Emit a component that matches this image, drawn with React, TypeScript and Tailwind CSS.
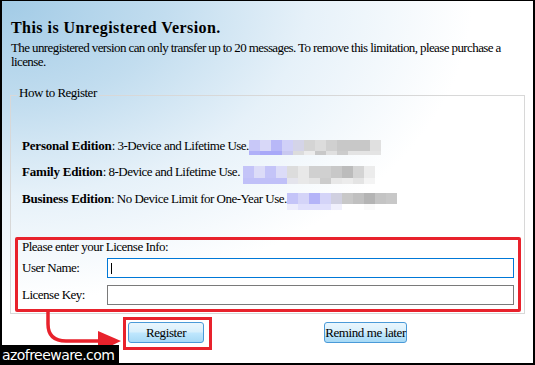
import React from "react";

const serif = { fontFamily: '"Liberation Serif", "Times New Roman", serif' };

const personal = {
  top: ["#c8c8f8", "#d8d8f8", "#b8b8f8", "#d0d0f8", "#d4d4e8", "#d4d4d4", "#dcdcdc", "#d0d0d0", "#c8c8c8", "#c8c8c8", "#c8c8c8", "#e0e0e0"],
  bottom: ["#b0b0f8", "#a8a8f8", "#a8a8f8", "#c8c8f0", "#dcdcdc", "#ececec", "#c8c8c8", "#e0e0e0", "#cccccc", "#e4e4e4", "#e4e4e4", "#e4e4e4"],
  th: 11,
  bh: 4,
};
const family = {
  top: ["#c4c4f8", "#dcdcf8", "#c4c4f8", "#dcdcf8", "#dcdcdc", "#e8e8e8", "#d0d0d0", "#d0d0d0", "#c8c8c8", "#bcbcbc", "#d4d4d4", "#ececec"],
  bottom: ["#c0c0f8", "#c0c0f8", "#c0c0f8", "#c0c0f8", "#e4e4ec", "#e8e8e8", "#e4e4e4", "#cccccc", "#e8e8e8", "#ececec", "#e4e4e4", "#f4f4f4"],
  th: 12,
  bh: 6,
};
const business = {
  top: ["#c4c4f8", "#d4d4f8", "#b4b4f8", "#d4d4f8", "#d0d0e0", "#c8c8c8", "#c0c0c0", "#b4b4b4", "#c4c4c4", "#c8c8c8"],
  bottom: ["#ececfc", "#e0e0fc", "#e0e0fc", "#e0e0fc", "#f0f0fc", "#ffffff", "#ffffff", "#fafafa", "#ffffff", "#ffffff"],
  th: 11,
  bh: 6,
};

function Pixels({ data }: { data: { top: string[]; bottom: string[]; th: number; bh: number } }) {
  return (
    <div className="flex flex-col mt-[1px]">
      <div className="flex">
        {data.top.map((c, i) => (
          <div key={i} className="w-[11px]" style={{ backgroundColor: c, height: data.th }} />
        ))}
      </div>
      <div className="flex">
        {data.bottom.map((c, i) => (
          <div key={i} className="w-[11px]" style={{ backgroundColor: c, height: data.bh }} />
        ))}
      </div>
    </div>
  );
}

function Btn({ children, w }: { children: React.ReactNode; w: string }) {
  return (
    <div
      className={`${w} h-[21px] rounded-[3px] border border-[#4a9ad8] bg-[linear-gradient(180deg,#eaf6fd_0%,#d9f0fc_45%,#bee6fd_55%,#a7d9f5_100%)] flex items-center justify-center whitespace-nowrap text-[13px] leading-[14px] text-black tracking-[-0.4px]`}
    >
      {children}
    </div>
  );
}

export default function App() {
  return (
    <div
      className="relative w-[535px] h-[365px] overflow-hidden border-black border-t border-l-2 border-r-2 border-b-2 bg-[radial-gradient(ellipse_470px_300px_at_0px_0px,#a2cbe6_0%,#c2ddef_35%,#e6f1f9_65%,#ffffff_100%)] text-black"
      style={serif}
    >
      <div className="pl-[9px] pr-[8px] pt-[17px]">
        <div className="text-[16px] leading-[20px] font-bold tracking-[0.45px]">This is Unregistered Version.</div>
        <div className="mt-[3px] text-[13px] leading-[14px] tracking-[-0.6px] w-[505px]">
          The unregistered version can only transfer up to 20 messages. To remove this limitation, please purchase a license.
        </div>

        <fieldset className="mt-[17px] ml-[-1px] w-[515px] border border-[#d8d8d8] px-0 pb-[1px]">
          <legend className="ml-[6px] px-[2px] pb-[4px] text-[13px] leading-[14px] tracking-[-0.5px]">How to Register</legend>

          <div className="pl-[11px] pt-[35px] text-[13px] leading-[14px] tracking-[-0.5px]">
            <div className="flex items-start h-[14px]">
              <span>
                <b className="tracking-[-0.2px]">Personal Edition</b>: 3-Device and Lifetime Use.
              </span>
              <Pixels data={personal} />
            </div>
            <div className="flex items-start h-[14px] mt-[12px]">
              <span>
                <b className="tracking-[-0.2px]">Family Edition</b>: 8-Device and Lifetime Use.{" "}
              </span>
              <div className="ml-[3px]">
                <Pixels data={family} />
              </div>
            </div>
            <div className="flex items-start h-[14px] mt-[13px]">
              <span>
                <b className="tracking-[-0.2px]">Business Edition</b>: No Device Limit for One-Year Use.
              </span>
              <Pixels data={business} />
            </div>
          </div>

          <div className="mt-[31px] ml-[4px] mr-[3px] border-[3px] border-[#e8222c] rounded-[2px] pl-[4px] pr-[4px] pb-[4px] text-[13px] leading-[14px] tracking-[-0.5px]">
            <div>Please enter your License Info:</div>
            <div className="mt-[4px] flex items-center">
              <div className="w-[85px]">User Name:</div>
              <div className="flex-1 h-[20px] border border-[#0078d7] bg-white flex items-center pl-[3px]">
                <span className="w-px h-[11px] bg-black" />
              </div>
            </div>
            <div className="mt-[7px] flex items-center">
              <div className="w-[85px]">License Key:</div>
              <div className="flex-1 h-[20px] border border-[#7a7a7a] bg-white" />
            </div>
          </div>
        </fieldset>

        <div className="mt-[3px] flex items-start">
          <div className="ml-[112px] border-[3px] border-[#e8222c] pl-[2px] pr-[5px] pt-[2px] pb-[4px]">
            <Btn w="w-[76px]">Register</Btn>
          </div>
          <div className="ml-[112px] mt-[5px]">
            <Btn w="w-[83px]">Remind me later</Btn>
          </div>
        </div>
      </div>

      <svg className="absolute left-[-2px] top-[-1px] pointer-events-none" width="535" height="365" viewBox="0 0 535 365">
        <path d="M48 311 L48 324 Q48 341 66 341 L102 341" fill="none" stroke="#e8222c" strokeWidth="3.5" />
        <polygon points="98,331 121,341 98,352" fill="#e8222c" />
      </svg>

      <div
        className="absolute left-[-2px] bottom-[-2px] w-[119px] h-[20px] bg-black text-white text-[14px] leading-[20px] pl-[2px] tracking-[-0.55px] whitespace-nowrap"
        style={{ fontFamily: '"DejaVu Sans", Verdana, sans-serif' }}
      >
        azofreeware.com
      </div>
    </div>
  );
}
